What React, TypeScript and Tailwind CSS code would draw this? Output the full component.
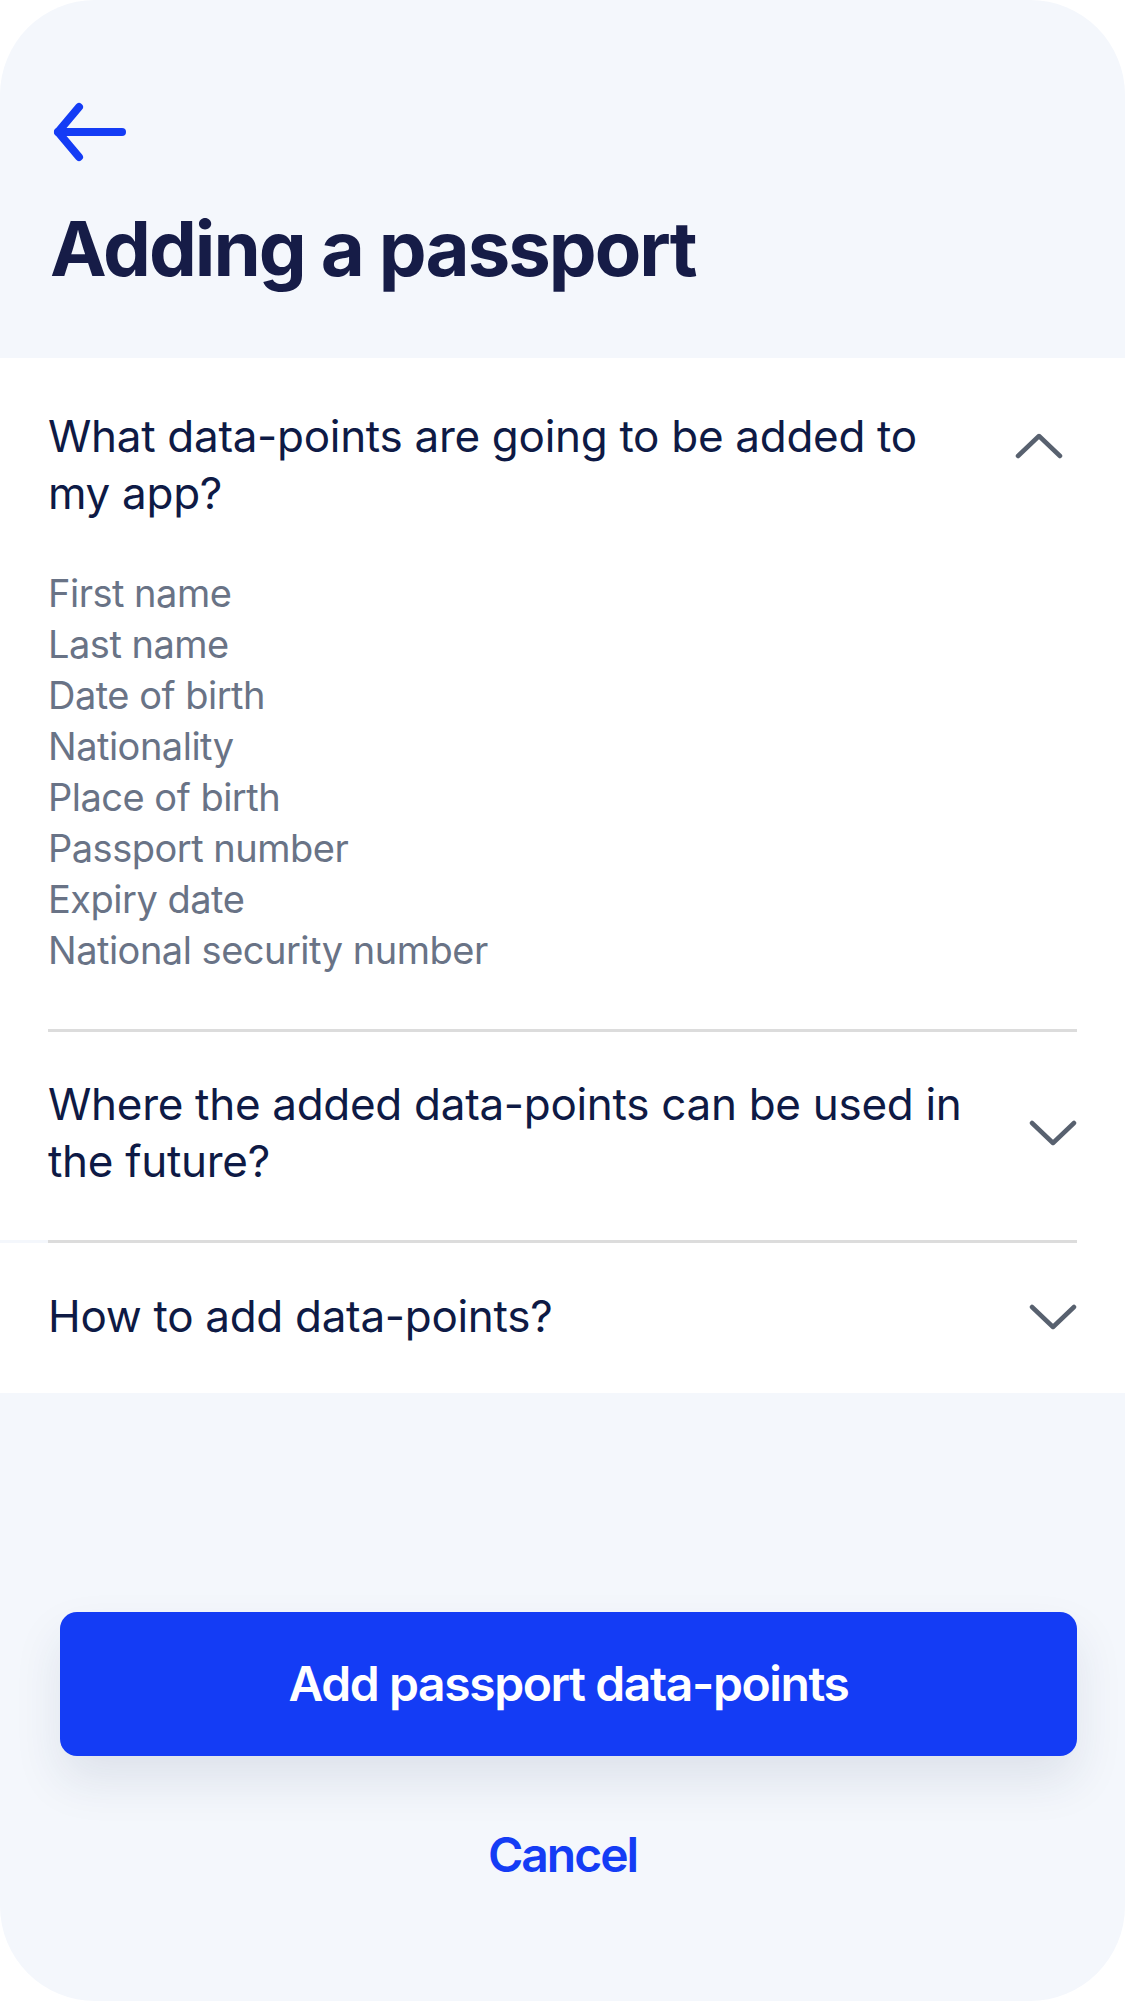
import React from 'react';

const dataPoints = [
    'First name',
    'Last name',
    'Date of birth',
    'Nationality',
    'Place of birth',
    'Passport number',
    'Expiry date',
    'National security number',
];

const ChevronUp: React.FC = () => (
    <svg width="48" height="26" viewBox="0 0 48 26" fill="none" stroke="#58616f" strokeWidth={4.5} strokeLinecap="round" strokeLinejoin="round">
        <path d="M3 23L24 3l21 20" />
    </svg>
);

const ChevronDown: React.FC = () => (
    <svg width="48" height="26" viewBox="0 0 48 26" fill="none" stroke="#58616f" strokeWidth={4.5} strokeLinecap="round" strokeLinejoin="round">
        <path d="M3 3l21 20L45 3" />
    </svg>
);

const App: React.FC = () => {
    return (
        <div className="min-h-screen bg-white" style={{ fontFamily: 'Inter, "Noto Sans", sans-serif' }}>
            <div className="h-[2001px] w-[1125px] rounded-[95px] bg-[#f4f7fc] overflow-hidden flex flex-col">
                {/* Header */}
                <div className="pt-[99px] pl-[50px] pb-[64px]">
                    <svg width="80" height="66" viewBox="0 0 80 66" fill="none" stroke="#143cf5" strokeWidth={8} strokeLinecap="round" strokeLinejoin="round">
                        <path d="M72 33H8" />
                        <path d="M29 8L8 33l21 25" />
                    </svg>
                    <h1 className="mt-[37px] text-[76px] leading-[92px] font-bold tracking-[-2px] text-[#161c47]">
                        Adding a passport
                    </h1>
                </div>

                {/* Accordion */}
                <div className="bg-white">
                    <div className="px-12">
                        <div className="pt-[50px] pb-[53px]">
                            <div className="flex items-start justify-between">
                                <p className="w-[930px] text-[44px] leading-[57px] text-[#0e1a45] tracking-[-0.3px]">
                                    What data-points are going to be added to my app?
                                </p>
                                <div className="mt-[25px] mr-[14px]">
                                    <ChevronUp />
                                </div>
                            </div>
                            <ul className="mt-[46px] text-[38px] leading-[51px] text-[#697386] tracking-[-0.5px]">
                                {dataPoints.map((item) => (
                                    <li key={item}>{item}</li>
                                ))}
                            </ul>
                        </div>
                        <div className="h-[3px] bg-[#dcdcdc]" />
                        <div className="pt-[44px] pb-[50px] flex items-center justify-between">
                            <p className="w-[930px] text-[44px] leading-[57px] text-[#0e1a45] tracking-[-0.3px]">
                                Where the added data-points can be used in the future?
                            </p>
                            <ChevronDown />
                        </div>
                    </div>
                    <div className="flex h-[3px] pr-12">
                        <div className="w-12 bg-[#f4f7fc]" />
                        <div className="flex-1 bg-[#dcdcdc]" />
                    </div>
                    <div className="px-12 pt-[45px] pb-[48px] flex items-center justify-between">
                        <p className="text-[44px] leading-[57px] text-[#0e1a45] tracking-[-0.3px]">How to add data-points?</p>
                        <ChevronDown />
                    </div>
                </div>

                {/* Actions */}
                <div className="mt-[219px] ml-[60px] mr-12">
                    <button className="w-full h-[144px] rounded-[17px] bg-[#143cf5] text-white text-[48px] font-semibold tracking-[-1.4px] shadow-[0_24px_48px_rgba(30,45,90,0.10)]">
                        Add passport data-points
                    </button>
                </div>
                <div className="mt-[70px] text-center text-[48px] leading-[58px] font-semibold text-[#143cf5] tracking-[-2px]">
                    Cancel
                </div>
            </div>
        </div>
    );
};

export default App;
